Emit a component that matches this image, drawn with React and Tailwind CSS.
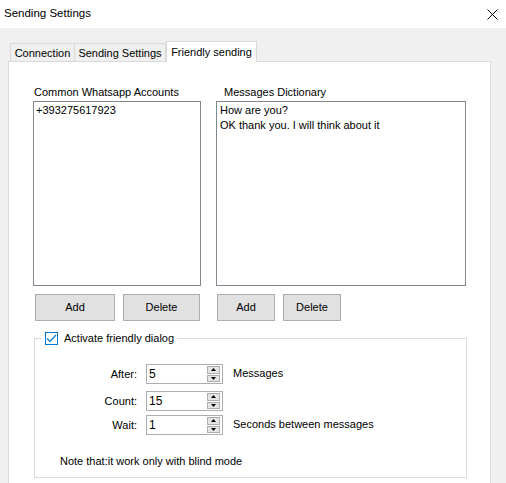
import React from "react";

function Spinner({ value }) {
  return (
    <div className="w-[77px] h-[20px] border border-[#adadad] bg-white flex items-stretch">
      <div className="flex-1 pl-[2px] pt-[2px] text-[12px] leading-[14px] text-[#000]">{value}</div>
      <div className="w-[13px] my-[1px] mr-[2px] flex flex-col gap-[1px]">
        <div className="flex-1 border border-[#adadad] bg-[#e5e5e5] flex items-center justify-center">
          <svg width="5" height="3" viewBox="0 0 5 3">
            <path d="M2.5 0 L5 3 L0 3 Z" fill="#000" />
          </svg>
        </div>
        <div className="flex-1 border border-[#adadad] bg-[#e5e5e5] flex items-center justify-center">
          <svg width="5" height="3" viewBox="0 0 5 3">
            <path d="M0 0 L5 0 L2.5 3 Z" fill="#000" />
          </svg>
        </div>
      </div>
    </div>
  );
}

function Button({ label, width }) {
  return (
    <button
      className="h-[27px] border border-[#adadad] bg-[#e1e1e1] text-[11px] text-black"
      style={{ width }}
    >
      {label}
    </button>
  );
}

export default function App() {
  return (
    <div className="w-[506px] h-[483px] bg-[#f0f0f0] overflow-hidden font-['Liberation_Sans',sans-serif] text-[11px] text-black">
      {/* title bar */}
      <div className="h-[28px] bg-white flex items-center justify-between pl-[4px] pr-[8px]">
        <span className="text-[11.5px] whitespace-nowrap">Sending Settings</span>
        <svg width="11" height="11" viewBox="0 0 11 11">
          <path d="M0.5 0.5 L10.5 10.5 M10.5 0.5 L0.5 10.5" stroke="#000" strokeWidth="1" />
        </svg>
      </div>

      <div className="pl-[8px] pr-[15px] pt-[12px]">
        {/* tabs */}
        <div className="flex items-end pl-[2px] h-[21px] text-[11px] whitespace-nowrap">
          <div className="w-[65px] h-[18px] border border-b-0 border-[#d9d9d9] bg-[#f0f0f0] flex items-center justify-center pt-[1px]">
            Connection
          </div>
          <div className="w-[91px] h-[18px] border border-b-0 border-l-0 border-[#d9d9d9] bg-[#f0f0f0] flex items-center justify-center pt-[1px]">
            Sending Settings
          </div>
          <div className="w-[91px] h-[21px] -mb-px relative z-10 border border-b-0 border-[#d9d9d9] bg-white flex items-start pt-[2px] justify-center">
            Friendly sending
          </div>
        </div>

        {/* panel */}
        <div className="h-[440px] bg-white border border-[#d9d9d9] pl-[24px] pt-[24px]">
          <div className="flex gap-[15px]">
            <div className="w-[168px]">
              <div className="pl-[1px] h-[15px] leading-[13px]">Common Whatsapp Accounts</div>
              <div className="h-[185px] border border-[#828790] pl-[2px] pt-[1px] leading-[14px]">
                +393275617923
              </div>
              <div className="flex gap-[8px] pl-[2px] mt-[8px]">
                <Button label="Add" width="80px" />
                <Button label="Delete" width="77px" />
              </div>
            </div>
            <div className="w-[250px]">
              <div className="pl-[8px] h-[15px] leading-[13px]">Messages Dictionary</div>
              <div className="h-[185px] border border-[#828790] pl-[3px] pt-[1px] leading-[14.5px]">
                <div>How are you?</div>
                <div>OK thank you. I will think about it</div>
              </div>
              <div className="flex gap-[8px] pl-[1px] mt-[8px]">
                <Button label="Add" width="58px" />
                <Button label="Delete" width="58px" />
              </div>
            </div>
          </div>

          <fieldset className="w-[433px] h-[147px] mt-[10px] ml-[1px] border border-[#dcdcdc] p-0">
            <legend className="ml-[7px] px-[3px] flex items-center gap-[6px] h-[14px]">
              <span className="w-[13px] h-[13px] border border-[#0078d7] flex items-center justify-center">
                <svg width="11" height="9" viewBox="0 0 11 9">
                  <path d="M1 4.5 L4 7.5 L10 1" stroke="#0078d7" strokeWidth="1.2" fill="none" />
                </svg>
              </span>
              <span>Activate friendly dialog</span>
            </legend>
            <div className="pt-[19px]">
              <div className="flex items-center h-[20px]">
                <div className="w-[102px] text-right">After:</div>
                <div className="ml-[9px]"><Spinner value="5" /></div>
                <div className="ml-[10px] -mt-[2px]">Messages</div>
              </div>
              <div className="flex items-center h-[20px] mt-[7px]">
                <div className="w-[102px] text-right">Count:</div>
                <div className="ml-[9px]"><Spinner value="15" /></div>
              </div>
              <div className="flex items-center h-[20px] mt-[4px]">
                <div className="w-[102px] text-right">Wait:</div>
                <div className="ml-[9px]"><Spinner value="1" /></div>
                <div className="ml-[10px] -mt-[2px]">Seconds between messages</div>
              </div>
              <div className="pl-[25px] mt-[18px]">Note that:it work only with blind mode</div>
            </div>
          </fieldset>
        </div>
      </div>
    </div>
  );
}
